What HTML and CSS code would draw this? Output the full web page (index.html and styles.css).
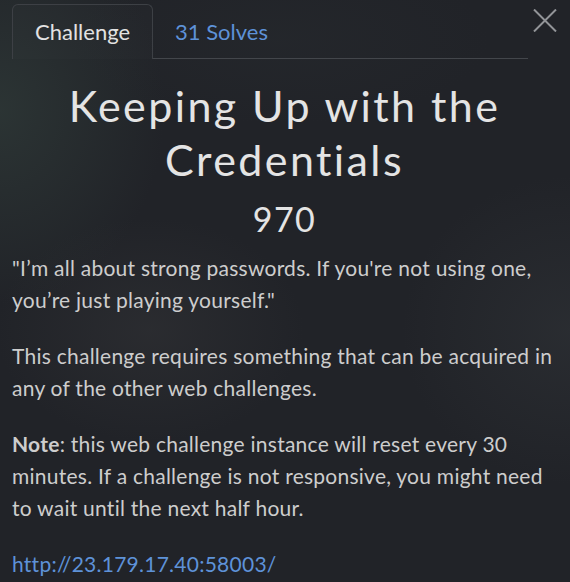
FILE: index.html
```html
<!DOCTYPE html>
<html>
<head>
<meta charset="utf-8">
<link rel="stylesheet" href="styles.css">
</head>
<body>
<div class="modal">
  <div class="header">
    <div class="tabs">
      <div class="tab active">Challenge</div>
      <div class="tab link">31 Solves</div>
      <div class="tab-fill"></div>
    </div>
    <button class="close" aria-label="Close">
      <svg width="24" height="23" viewBox="0 0 24 23"><path d="M1 0.5 L23 22.5 M23 0.5 L1 22.5" stroke="#929498" stroke-width="2" fill="none"/></svg>
    </button>
  </div>
  <h1 class="title">Keeping Up with the Credentials</h1>
  <div class="value">970</div>
  <div class="desc">
    <p>"I’m all about strong passwords. If you're not using one, you’re just playing yourself."</p>
    <p>This challenge requires something that can be acquired in any of the other web challenges.</p>
    <p><strong>Note</strong>: this web challenge instance will reset every 30 minutes. If a challenge is not responsive, you might need to wait until the next half hour.</p>
    <p><a href="#">http://23.179.17.40:58003/</a></p>
  </div>
</div>
</body>
</html>
```
FILE: styles.css
```css
html, body {
  margin: 0;
  padding: 0;
  width: 570px;
  height: 582px;
  overflow: hidden;
}
body {
  background:
    radial-gradient(ellipse 220px 260px at 0px 110px, rgba(52,66,62,0.55), rgba(0,0,0,0) 75%),
    radial-gradient(ellipse 220px 160px at 150px 330px, rgba(64,64,66,0.3), rgba(0,0,0,0) 70%),
    radial-gradient(ellipse 240px 220px at 570px 330px, rgba(58,62,66,0.35), rgba(0,0,0,0) 70%),
    radial-gradient(ellipse 300px 120px at 280px 40px, rgba(40,44,48,0.4), rgba(0,0,0,0) 70%),
    #212328;
  font-family: Lato, "Noto Sans", sans-serif;
  color: #d0d0d0;
}
.modal {
  padding: 4px 13px 0 12px;
}
.header {
  display: flex;
  align-items: flex-start;
  gap: 5px;
}
.tabs {
  flex: 1;
  display: flex;
  height: 55px;
}
.tab {
  font-size: 22px;
  padding: 0 22px;
  height: 55px;
  line-height: 53px;
  box-sizing: border-box;
}
.tab.active {
  color: #e2e2e2;
  border: 1px solid #3d4045;
  border-bottom: none;
  border-radius: 6px 6px 0 0;
  background: rgba(255,255,255,0.012);
}
.tab.link {
  color: #5e92d8;
  padding-top: 1px;
  border-bottom: 1px solid #43464b;
}
.tab-fill {
  flex: 1;
  border-bottom: 1px solid #43464b;
}
.close {
  background: none;
  border: 0;
  padding: 0;
  margin: 5px 0 0 0;
  width: 24px;
  height: 23px;
  display: block;
  cursor: pointer;
}
.title {
  margin: 20px 0 0;
  text-align: center;
  font-weight: 400;
  font-size: 43px;
  line-height: 54px;
  letter-spacing: 2.4px;
  color: #e4e4e4;
  padding: 0 40px;
}
.value {
  text-align: center;
  font-size: 34px;
  line-height: 40px;
  letter-spacing: 1.5px;
  margin-top: 12px;
  color: #e4e4e4;
}
.desc {
  margin-top: 13px;
  font-size: 21px;
  line-height: 32.4px;
  letter-spacing: 0.25px;
  color: #cdcdcd;
}
.desc p {
  margin: 0 0 23px;
}
.desc strong {
  font-weight: 700;
}
.desc a {
  color: #5e92d8;
  text-decoration: none;
}
```
